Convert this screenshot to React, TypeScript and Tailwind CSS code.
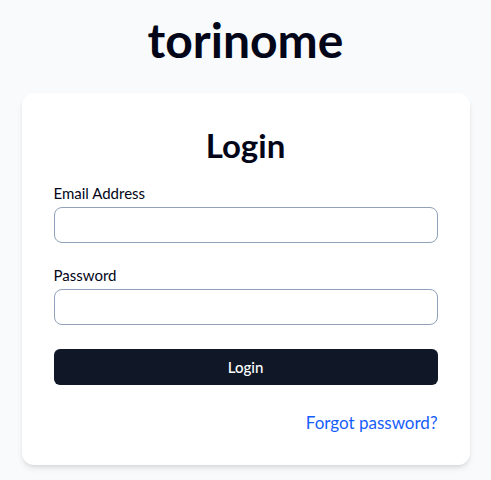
export default function App() {
  return (
    <div className="min-h-screen bg-slate-50 font-['Lato',sans-serif] flex flex-col items-center pt-[12px]">
      <h1 className="text-5xl leading-[56px] font-bold text-slate-950">torinome</h1>

      {/* Login card */}
      <div className="mt-[25px] w-[448px] bg-white rounded-xl shadow-md px-8 pt-8 pb-7">
        <h2 className="text-[33px] leading-10 font-bold text-center text-slate-950">Login</h2>

        <form className="mt-4" onSubmit={(e) => e.preventDefault()}>
          <label className="block text-[15px] leading-6 text-slate-950">Email Address</label>
          <input
            type="email"
            className="mt-0.5 block w-full h-9 rounded-lg border border-slate-400 bg-white px-3 text-base outline-none"
          />

          <label className="mt-5 block text-[15px] leading-6 text-slate-950">Password</label>
          <input
            type="password"
            className="mt-0.5 block w-full h-9 rounded-lg border border-slate-400 bg-white px-3 text-base outline-none"
          />

          <button
            type="submit"
            className="mt-6 w-full h-9 rounded-md bg-gray-900 text-white text-[15px] font-medium"
          >
            Login
          </button>

          <div className="mt-6 text-right">
            <a href="#" className="text-[17px] leading-7 text-blue-600">
              Forgot password?
            </a>
          </div>
        </form>
      </div>
    </div>
  );
}
